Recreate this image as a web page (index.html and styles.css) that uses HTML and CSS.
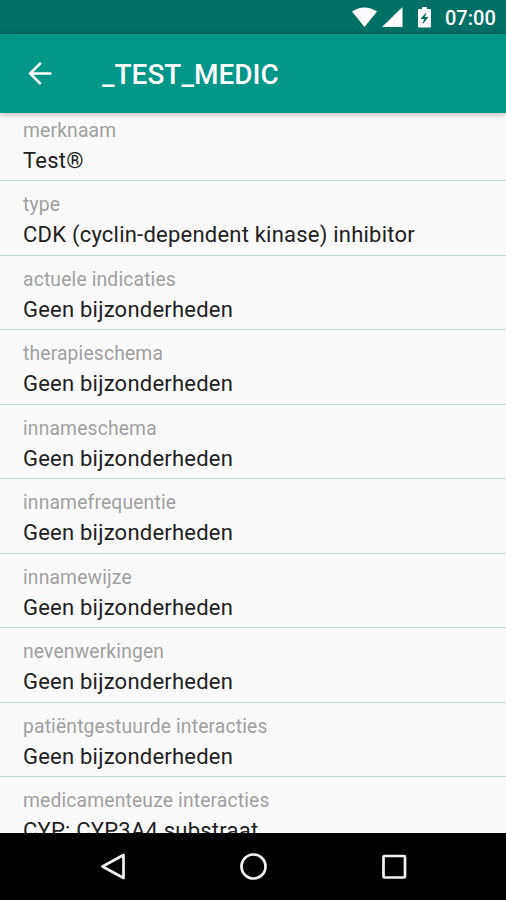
FILE: index.html
```html
<!DOCTYPE html>
<html lang="nl">
<head>
<meta charset="utf-8">
<title>_TEST_MEDIC</title>
<link rel="stylesheet" href="styles.css">
</head>
<body>
<div class="screen">
  <div class="status">
    <svg class="status-icons" width="86" height="34" viewBox="0 0 86 34" fill="#fff">
      <path d="M0 11.500Q12.500 3.500 25 11.500L12.500 27Z"/>
      <path d="M30 27L50.500 7V27Z"/>
      <path fill-rule="evenodd" d="M70 7h5v2h3q1 0 1 1v16.500q0 1-1 1H67q-1 0-1-1V10q0-1 1-1h3zM74.500 12L68.500 19H72L70.500 24.500L76.500 17H73Z"/>
    </svg>
    <span class="clock">07:00</span>
  </div>
  <header class="bar">
    <svg class="back" width="26" height="26" viewBox="0 0 26 26" fill="none" stroke="#fff" stroke-width="2.500"><path d="M25.500 12.500H4.500M14.800 1.800L4.100 12.500L14.800 23.200"/></svg>
    <h1 class="title">_TEST_MEDIC</h1>
  </header>
  <main class="content">
    <dl class="list">
      <div class="row"><dt>merknaam</dt><dd>Test®</dd></div>
      <div class="row"><dt>type</dt><dd>CDK (cyclin-dependent kinase) inhibitor</dd></div>
      <div class="row"><dt>actuele indicaties</dt><dd>Geen bijzonderheden</dd></div>
      <div class="row"><dt>therapieschema</dt><dd>Geen bijzonderheden</dd></div>
      <div class="row"><dt>innameschema</dt><dd>Geen bijzonderheden</dd></div>
      <div class="row"><dt>innamefrequentie</dt><dd>Geen bijzonderheden</dd></div>
      <div class="row"><dt>innamewijze</dt><dd>Geen bijzonderheden</dd></div>
      <div class="row"><dt>nevenwerkingen</dt><dd>Geen bijzonderheden</dd></div>
      <div class="row"><dt>patiëntgestuurde interacties</dt><dd>Geen bijzonderheden</dd></div>
      <div class="row"><dt>medicamenteuze interacties</dt><dd>CYP: CYP3A4 substraat</dd></div>
    </dl>
  </main>
  <nav class="nav">
    <svg width="28" height="28" viewBox="0 0 28 28"><path d="M23.500 2V25L2.500 13.500Z"/></svg>
    <svg width="28" height="28" viewBox="0 0 28 28"><circle cx="13.500" cy="13.500" r="12"/></svg>
    <svg width="28" height="28" viewBox="0 0 28 28"><rect x="3.500" y="3" width="21.500" height="21.500" rx="1"/></svg>
  </nav>
</div>
</body>
</html>
```
FILE: styles.css
```css
* { box-sizing: border-box; }
body { margin: 0; font-family: Roboto, "Liberation Sans", sans-serif; }
.screen { width: 506px; height: 900px; display: flex; flex-direction: column; overflow: hidden; background: #fafafa; }
.status { height: 34px; flex: none; background: #007065; display: flex; justify-content: flex-end; align-items: center; padding-right: 11px; }
.status-icons { flex: none; margin-right: 7.500px; }
.clock { color: #fff; font-size: 20px; font-weight: 500; line-height: 34px; padding-top: 2px; width: 50px; white-space: nowrap; }
.bar { height: 79px; flex: none; background: #009688; display: flex; align-items: center; padding-left: 26px; box-shadow: 0 1px 6px rgba(0,0,0,.3); z-index: 1; }
.back { flex: none; }
.title { margin: 3px 0 0 50px; color: #fff; font-size: 28px; font-weight: 500; line-height: 34px; }
.content { flex: 1; min-height: 0; overflow: hidden; }
.list { margin: -6.500px 0 0; }
.row { height: 74.550px; padding: 13px 0 0 23px; border-bottom: 1px solid #badcd4; white-space: nowrap; }
.row dt { color: #a0a0a0; font-size: 19.300px; line-height: 22px; letter-spacing: .16px; }
.row dd { margin: 5px 0 0; color: #212121; font-size: 22px; line-height: 28px; letter-spacing: .22px; }
.nav { height: 67px; flex: none; background: #000; display: flex; justify-content: space-between; align-items: center; padding: 0 98px 0 100px; }
.nav svg { fill: none; stroke: #f2f2f2; stroke-width: 2.700; stroke-linejoin: round; }
```
